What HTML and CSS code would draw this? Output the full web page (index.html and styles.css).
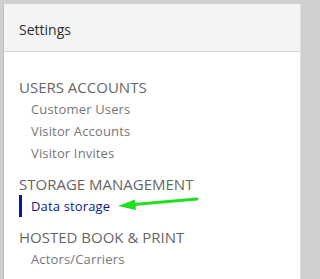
FILE: index.html
```html
<!DOCTYPE html>
<html>
<head>
<meta charset="utf-8">
<link rel="stylesheet" href="styles.css">
</head>
<body>
<div class="panel">
  <div class="panel-header">Settings</div>
  <div class="panel-body">
    <div class="group">
      <div class="group-title">USERS ACCOUNTS</div>
      <div class="item">Customer Users</div>
      <div class="item">Visitor Accounts</div>
      <div class="item">Visitor Invites</div>
    </div>
    <div class="group">
      <div class="group-title">STORAGE MANAGEMENT</div>
      <div class="item active">Data storage
        <svg class="arrow" width="82" height="16" viewBox="0 0 82 16">
          <line x1="14" y1="8.8" x2="80" y2="3" stroke="#1fe01f" stroke-width="3" stroke-linecap="round"/>
          <polygon points="1,10 18,3.5 19,14" fill="#1fe01f"/>
        </svg>
      </div>
    </div>
    <div class="group">
      <div class="group-title">HOSTED BOOK &amp; PRINT</div>
      <div class="item">Actors/Carriers</div>
    </div>
  </div>
</div>
</body>
</html>
```

FILE: styles.css
```css
html, body {
  margin: 0;
  padding: 0;
}
body {
  background: #cfcfcf;
  font-family: "Open Sans", "Noto Sans", sans-serif;
  width: 304px;
  height: 279px;
  overflow: hidden;
}
.panel {
  margin: 4px 0 0 3px;
  width: 298px;
  background: #ffffff;
  border-left: 1px solid #bdbdbd;
  border-right: 1px solid #dcdcdc;
  height: 275px;
  box-sizing: border-box;
}
.panel-header {
  height: 48px;
  box-sizing: border-box;
  background: #f4f4f4;
  border-bottom: 1px solid #d5d5d5;
  padding: 16px 0 0 15px;
  font-size: 14px;
  line-height: 20px;
  color: #2e2e2e;
}
.panel-body {
  padding: 24px 0 0 15px;
}
.group + .group {
  margin-top: 9px;
}
.group-title {
  font-size: 15px;
  line-height: 22px;
  color: #666666;
}
.item {
  position: relative;
  font-size: 13px;
  letter-spacing: 0.15px;
  line-height: 22px;
  color: #777777;
  border-left: 3px solid transparent;
  padding-left: 9px;
}
.item.active {
  border-left-color: #0b1a8c;
  color: #0b1a8c;
}
.arrow {
  position: absolute;
  left: 95px;
  top: 1px;
}
```
